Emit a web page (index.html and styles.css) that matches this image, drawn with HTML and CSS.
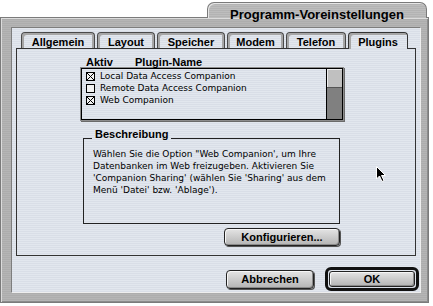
FILE: index.html
```html
<!DOCTYPE html>
<html>
  <head>
    <title>Programm-Voreinstellungen</title>
    <link rel="stylesheet" href="styles.css">
  </head>
  <body>
    <div class="screen">
      <div class="title-row">
        <div class="title-tab">Programm-Voreinstellungen</div>
      </div>

      <div class="window">
        <div class="pane">
          <div class="tabs">
            <div class="tab tab-allgemein">Allgemein</div>
            <div class="tab tab-layout">Layout</div>
            <div class="tab tab-speicher">Speicher</div>
            <div class="tab tab-modem">Modem</div>
            <div class="tab tab-telefon">Telefon</div>
            <div class="tab tab-plugins active">Plugins</div>
          </div>

          <div class="panel">
            <div class="list-head">
              <span class="col-aktiv">Aktiv</span>
              <span>Plugin-Name</span>
            </div>

            <div class="listbox">
              <ul class="list">
                <li><span class="check on"></span>Local Data Access Companion</li>
                <li><span class="check"></span>Remote Data Access Companion</li>
                <li><span class="check on"></span>Web Companion</li>
              </ul>
              <div class="scrollbar">
                <div class="thumb"></div>
              </div>
            </div>

            <div class="details">
              <fieldset class="group">
                <legend>Beschreibung</legend>
                <p>
                  Wählen Sie die Option "Web Companion', um Ihre<br>
                  Datenbanken im Web freizugeben. Aktivieren Sie<br>
                  'Companion Sharing' (wählen Sie 'Sharing' aus dem<br>
                  Menü 'Datei' bzw. 'Ablage').
                </p>
              </fieldset>
              <button class="btn btn-config">Konfigurieren...</button>
            </div>
          </div>

          <div class="footer">
            <button class="btn btn-cancel">Abbrechen</button>
            <span class="default-ring">
              <button class="btn btn-ok">OK</button>
            </span>
          </div>
        </div>
      </div>

      <!-- mouse pointer -->
      <svg class="cursor" width="11" height="16" viewBox="0 0 11 16">
        <path d="M0.5 0.5 L0.5 13 L3.5 10 L6 15.5 L8 14.5 L5.5 9.5 L9.5 9.5 Z" fill="#000" stroke="#fff" stroke-width="1"/>
      </svg>
    </div>
  </body>
</html>
```

FILE: styles.css
```css
* {
  box-sizing: border-box;
  margin: 0;
  padding: 0;
}

body {
  background: #ffffff;
  font-family: "DejaVu Sans", sans-serif;
  font-size: 9px;
  color: #000000;
}

.screen {
  position: relative;
  width: 433px;
  height: 306px;
  overflow: hidden;
  background: #ffffff;
}

/* window title tab */
.title-row {
  display: flex;
  justify-content: flex-end;
  height: 17px;
  padding-top: 2px;
  padding-right: 6px;
}

.title-tab {
  position: relative;
  z-index: 1;
  width: 220px;
  height: 16px;
  padding-top: 4px;
  border: 1px solid #7a7a7a;
  border-bottom: none;
  border-radius: 7px 7px 0 0;
  background: repeating-linear-gradient(to bottom, #bdbdbd 0 1px, #b3b3b3 1px 2px);
  box-shadow: inset 1px 1px 0 #e6e6e6;
  font-family: "Liberation Sans", Arial, sans-serif;
  font-weight: bold;
  font-size: 13px;
  line-height: 15px;
  text-align: center;
}

/* window frame */
.window {
  width: 429px;
  height: 286px;
  padding: 9px 7px 9px 10px;
  border: 1px solid #7b7b7b;
  background: repeating-linear-gradient(to bottom, #b5b5b5 0 1px, #adadad 1px 2px);
  box-shadow: inset 1px 1px 0 #dcdcdc, inset -1px -1px 0 #8c8c8c;
}

.pane {
  width: 410px;
  height: 266px;
  padding: 4px 0 0 4px;
  border: 1px solid #7d7d7d;
  border-right-color: #eeeeee;
  border-bottom-color: #eeeeee;
  background: repeating-linear-gradient(to bottom, #e2e7ee 0 1px, #d9dee7 1px 2px);
}

/* tabs */
.tabs {
  display: flex;
  gap: 2px;
  margin-left: 5px;
  margin-bottom: -1px;
}

.tab {
  position: relative;
  height: 16px;
  padding-top: 3px;
  border: 1px solid #4a4a4a;
  border-bottom: none;
  border-radius: 4px 4px 0 0;
  background: repeating-linear-gradient(to bottom, #e2e7ee 0 1px, #d9dee7 1px 2px);
  box-shadow: inset 2px 2px 0 #a6a6a6, inset -2px 0 0 #a6a6a6;
  font-family: "Liberation Sans", Arial, sans-serif;
  font-weight: bold;
  font-size: 11px;
  line-height: 12px;
  text-align: center;
}

.tab.active {
  z-index: 1;
  height: 17px;
  border-color: #333333;
  box-shadow: inset 2px 2px 0 #a6a6a6;
}

.tab-allgemein { width: 74px; }
.tab-layout { width: 58px; }
.tab-speicher { width: 68px; }
.tab-modem { width: 57px; }
.tab-telefon { width: 60px; }
.tab-plugins { width: 60px; }

.panel {
  width: 400px;
  height: 208px;
  padding: 8px 0 0 64px;
  border: 1px solid #333333;
}

.list-head {
  display: flex;
  height: 11px;
  font-family: "Liberation Sans", Arial, sans-serif;
  font-weight: bold;
  font-size: 11px;
  line-height: 11px;
}

.col-aktiv {
  width: 54px;
  padding-left: 5px;
}

/* plugin list */
.listbox {
  display: flex;
  width: 262px;
  height: 52px;
  border: 1px solid #000000;
  background: repeating-linear-gradient(to bottom, #e2e7ee 0 1px, #d9dee7 1px 2px);
  box-shadow: 0 0 0 1px #8c8c8c, 1px 1px 0 1px #6a6a6a;
}

.list {
  flex: 1;
  list-style: none;
  padding: 1px 0 0 4px;
}

.list li {
  display: flex;
  align-items: center;
  height: 12px;
  line-height: 12px;
  white-space: nowrap;
}

.check {
  width: 9px;
  height: 9px;
  margin-right: 5px;
  border: 1px solid #000000;
  background: #f2f2f2;
}

.check.on {
  background:
    linear-gradient(45deg, transparent 45%, #000 45%, #000 55%, transparent 55%),
    linear-gradient(-45deg, transparent 45%, #000 45%, #000 55%, transparent 55%),
    #f2f2f2;
}

.scrollbar {
  width: 16px;
  border-left: 1px solid #000000;
  background: #808080;
}

.thumb {
  height: 19px;
  border-bottom: 1px solid #555555;
  background: #c0c0c0;
  box-shadow: inset 1px 1px 0 #ececec;
}

/* description */
.details {
  display: flex;
  flex-direction: column;
  align-items: flex-end;
  width: 257px;
  margin-left: 2px;
}

.group {
  width: 257px;
  height: 96px;
  margin-top: 8px;
  padding: 0 0 0 9px;
  border: 1px solid #222222;
}

.group legend {
  margin-left: -1px;
  padding: 0 3px 8px 3px;
  font-family: "Liberation Sans", Arial, sans-serif;
  font-weight: bold;
  font-size: 11px;
  line-height: 12px;
}

.group p {
  line-height: 12px;
  white-space: nowrap;
}

/* buttons */
.btn {
  height: 18px;
  border: 1px solid #222222;
  border-radius: 4px;
  background: linear-gradient(to bottom, #e4e4e4, #b4b4b4);
  box-shadow: inset 1px 1px 0 #f6f6f6, inset -1px -1px 0 #8a8a8a, 1px 1px 0 #555555;
  font-family: "Liberation Sans", Arial, sans-serif;
  font-weight: bold;
  font-size: 11px;
  color: #000000;
}

.btn-config {
  width: 116px;
  margin-top: 4px;
}

.footer {
  display: flex;
  align-items: center;
  justify-content: flex-end;
  gap: 11px;
  margin-top: 11px;
  padding-right: 1px;
}

.btn-cancel {
  width: 88px;
  height: 19px;
}

.default-ring {
  display: flex;
  width: 94px;
  height: 24px;
  padding: 1px;
  border: 3px solid #111111;
  border-radius: 6px;
}

.btn-ok {
  width: 100%;
  height: 100%;
  border-radius: 3px;
  box-shadow: inset 1px 1px 0 #f6f6f6, inset -1px -1px 0 #8a8a8a;
}

.cursor {
  position: absolute;
  left: 376px;
  top: 166px;
}
```
